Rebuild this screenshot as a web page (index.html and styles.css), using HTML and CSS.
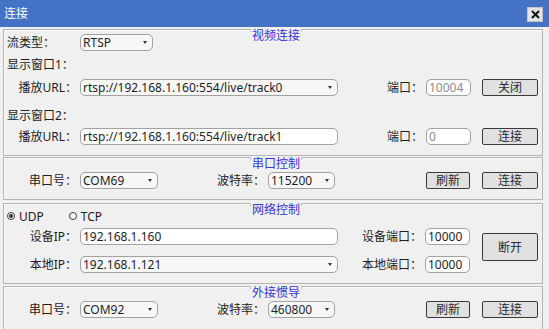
FILE: index.html
```html
<!DOCTYPE html>
<html lang="zh">
<head>
<meta charset="utf-8">
<title>连接</title>
<link rel="stylesheet" href="styles.css">
</head>
<body>
<div class="titlebar">
  <span class="title">连接</span>
  <span class="close"><svg width="9" height="9" viewBox="0 0 9 9"><path d="M1 1L8 8M8 1L1 8" stroke="#111" stroke-width="2" fill="none"/></svg></span>
</div>
<div class="content">
  <div class="group g1">
    <div class="gtitle">视频连接</div>
    <div class="row">
      <span class="lbl lbl-l">流类型：</span>
      <div class="combo w-rtsp">RTSP</div>
    </div>
    <div class="caption cap1">显示窗口1：</div>
    <div class="row">
      <span class="lbl">播放URL：</span>
      <div class="combo w-url">rtsp://192.168.1.160:554/live/track0</div>
      <span class="lbl lbl-port">端口：</span>
      <div class="input w-port dis">10004</div>
      <button class="btn w-btn">关闭</button>
    </div>
    <div class="caption cap2">显示窗口2：</div>
    <div class="row">
      <span class="lbl">播放URL：</span>
      <div class="input w-url">rtsp://192.168.1.160:554/live/track1</div>
      <span class="lbl lbl-port">端口：</span>
      <div class="input w-port dis">0</div>
      <button class="btn w-btn">连接</button>
    </div>
  </div>

  <div class="group g2">
    <div class="gtitle">串口控制</div>
    <div class="row">
      <span class="lbl">串口号：</span>
      <div class="combo w-com">COM69</div>
      <span class="lbl lbl-baud">波特率：</span>
      <div class="combo w-baud">115200</div>
      <button class="btn w-small sp">刷新</button>
      <button class="btn w-btn">连接</button>
    </div>
  </div>

  <div class="group g3">
    <div class="gtitle">网络控制</div>
    <div class="netwrap">
      <div class="netleft">
        <div class="radios">
          <span class="radio on"></span><span class="rtext">UDP</span>
          <span class="radio r2"></span><span class="rtext">TCP</span>
        </div>
        <div class="row">
          <span class="lbl">设备IP：</span>
          <div class="input w-url">192.168.1.160</div>
          <span class="lbl lbl-nport">设备端口：</span>
          <div class="input w-port">10000</div>
        </div>
        <div class="row row-gap">
          <span class="lbl">本地IP：</span>
          <div class="combo w-url">192.168.1.121</div>
          <span class="lbl lbl-nport">本地端口：</span>
          <div class="input w-port">10000</div>
        </div>
      </div>
      <button class="btn w-btn tall">断开</button>
    </div>
  </div>

  <div class="group g4">
    <div class="gtitle">外接惯导</div>
    <div class="row">
      <span class="lbl">串口号：</span>
      <div class="combo w-com">COM92</div>
      <span class="lbl lbl-baud">波特率：</span>
      <div class="combo w-baud">460800</div>
      <button class="btn w-small sp">刷新</button>
      <button class="btn w-btn">连接</button>
    </div>
  </div>
</div>
</body>
</html>
```

FILE: styles.css
```css
* { box-sizing: border-box; }

body {
  margin: 0;
  width: 549px;
  height: 329px;
  overflow: hidden;
  background: #f0f0f0;
  font-family: "Noto Sans", "Noto Sans CJK SC", sans-serif;
  font-size: 12px;
  color: #1e1e1e;
}

.titlebar {
  height: 27px;
  background: #4472c4;
  display: flex;
  align-items: center;
  justify-content: space-between;
  padding: 0 6px 0 4px;
  color: #ffffff;
}

.title { font-size: 12px; line-height: 14px; margin-top: 1px; }

.close {
  width: 16px;
  height: 15px;
  margin-top: 1px;
  background: #e4e4e4;
  border: 1px solid #c4c4c4;
  display: flex;
  align-items: center;
  justify-content: center;
}

.content {
  padding: 2px 0 0 3px;
  width: 543px;
  display: flex;
  flex-direction: column;
}

.group {
  position: relative;
  width: 540px;
  border: 1px solid #b4b4b4;
  box-shadow: inset 1px 1px 0 #fbfbfb;
}

.g1 { height: 127px; padding-top: 4px; }
.g2 { height: 43px; margin-top: 1px; padding-top: 14px; }
.g3 { height: 81px; margin-top: 3px; }
.g4 { height: 50px; margin-top: 2px; padding-top: 14px; }

.gtitle {
  position: absolute;
  top: -1px;
  left: 246px;
  padding: 0 2px;
  line-height: 13px;
  background: #f0f0f0;
  color: #3434d6;
}
.gtitle::before,
.gtitle::after {
  content: "";
  position: absolute;
  top: 0;
  width: 1px;
  height: 3px;
  background: #c4c4c4;
}
.gtitle::before { left: 0; }
.gtitle::after { right: 0; }

.row {
  display: flex;
  align-items: center;
  height: 17px;
}

.lbl {
  width: 76px;
  text-align: right;
  padding-right: 3px;
  line-height: 17px;
  white-space: nowrap;
}
.lbl-l { text-align: left; padding-left: 3px; }
.lbl-port { width: 88px; }
.lbl-baud { width: 110px; }
.lbl-nport { width: 87px; }

.caption {
  padding-left: 3px;
}
.cap1 { height: 28px; line-height: 28px; }
.cap2 { height: 32px; padding-top: 7px; line-height: 26px; }

.combo,
.input {
  position: relative;
  height: 17px;
  line-height: 15px;
  border: 1px solid #a2a2a2;
  border-radius: 5px;
  padding: 0 2px;
  white-space: nowrap;
  overflow: hidden;
}
.combo { background: #f7f7f7; }
.input { background: #ffffff; }
.combo::after {
  content: "";
  position: absolute;
  right: 5px;
  top: 6px;
  border-left: 2px solid transparent;
  border-right: 2px solid transparent;
  border-top: 3px solid #333333;
}
.dis { color: #8c8c8c; }

.w-rtsp { width: 73px; }
.w-url { width: 258px; }
.w-port { width: 45px; }
.w-com { width: 78px; }
.w-baud { width: 67px; }

.btn {
  height: 17px;
  margin: 0 0 0 11px;
  padding: 0;
  border: 1px solid #3a3a3a;
  border-radius: 2px;
  background: #e1e1e1;
  font-family: "Noto Sans", "Noto Sans CJK SC", sans-serif;
  font-size: 12px;
  line-height: 15px;
  color: #2a2a2a;
}
.w-btn { width: 56px; }
.w-small { width: 44px; }
.sp { margin-left: 91px; }
.g2 .w-btn, .g4 .w-btn { margin-left: 12px; }

.netwrap { display: flex; }
.netleft { display: flex; flex-direction: column; }
.radios {
  height: 24px;
  display: flex;
  align-items: center;
  padding-left: 3px;
}
.radio {
  width: 8px;
  height: 8px;
  border: 1px solid #333333;
  border-radius: 50%;
  background: #ffffff;
  display: flex;
  align-items: center;
  justify-content: center;
}
.radio.on::after {
  content: "";
  width: 4px;
  height: 4px;
  border-radius: 50%;
  background: #333333;
}
.r2 { margin-left: 25px; }
.rtext { margin-left: 4px; line-height: 17px; }
.row-gap { margin-top: 11px; }
.tall { height: 28px; margin-top: 29px; margin-left: 12px; }
```
